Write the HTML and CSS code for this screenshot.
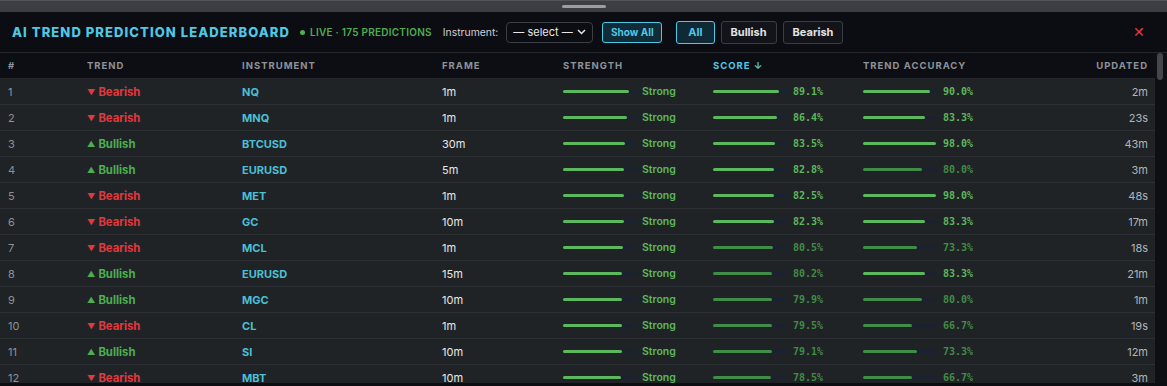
FILE: index.html
```html
<!DOCTYPE html>
<html lang="en">
<head>
<meta charset="utf-8">
<title>AI Trend Prediction Leaderboard</title>
<link rel="stylesheet" href="styles.css">
</head>
<body>
<div class="panel">
  <div class="topbar"><div class="grip"></div></div>
  <header class="header">
    <h1 class="title">AI TREND PREDICTION LEADERBOARD</h1>
    <div class="live"><span class="dot"></span>LIVE · 175 PREDICTIONS</div>
    <label class="inst-label">Instrument:</label>
    <div class="select"><span>— select —</span>
      <svg width="9" height="6" viewBox="0 0 9 6"><path d="M1 1l3.5 3.5L8 1" fill="none" stroke="#e6e6e6" stroke-width="1.5"/></svg>
    </div>
    <button class="btn btn-show">Show All</button>
    <div class="filters">
      <button class="btn btn-filter active">All</button>
      <button class="btn btn-filter">Bullish</button>
      <button class="btn btn-filter">Bearish</button>
    </div>
    <button class="close">✕</button>
  </header>
  <div class="main">
    <div class="table">
      <div class="row head">
        <div>#</div><div>TREND</div><div>INSTRUMENT</div><div>FRAME</div><div>STRENGTH</div><div class="sorted">SCORE ↓</div><div>TREND ACCURACY</div><div class="right">UPDATED</div>
      </div>
      <div id="rows"></div>
    </div>
    <div class="scrollbar"><div class="thumb"></div></div>
  </div>
  <div class="bottom"></div>
</div>
<script src="app.js"></script>
</body>
</html>
```
FILE: app.js
```js
const data = [
  [1,'Bearish','NQ','1m',89.1,90.0,'2m'],
  [2,'Bearish','MNQ','1m',86.4,83.3,'23s'],
  [3,'Bullish','BTCUSD','30m',83.5,98.0,'43m'],
  [4,'Bullish','EURUSD','5m',82.8,80.0,'3m'],
  [5,'Bearish','MET','1m',82.5,98.0,'48s'],
  [6,'Bearish','GC','10m',82.3,83.3,'17m'],
  [7,'Bearish','MCL','1m',80.5,73.3,'18s'],
  [8,'Bullish','EURUSD','15m',80.2,83.3,'21m'],
  [9,'Bullish','MGC','10m',79.9,80.0,'1m'],
  [10,'Bearish','CL','1m',79.5,66.7,'19s'],
  [11,'Bullish','SI','10m',79.1,73.3,'12m'],
  [12,'Bearish','MBT','10m',78.5,66.7,'3m']
];
function bar(v, label, cls) {
  const dim = v < 81 ? ' dim' : '';
  return '<div class="cell-bar"><div class="track"><div class="fill' + (cls || dim) + '" style="width:' + v + '%"></div></div><span class="val ' + (cls ? 'strong' : 'mono') + (cls ? '' : dim) + '">' + label + '</span></div>';
}
const html = data.map(r => {
  const bull = r[1] === 'Bullish';
  return '<div class="row">' +
    '<div class="num">' + r[0] + '</div>' +
    '<div class="trend ' + (bull ? 'bull' : 'bear') + '"><span class="tri">' + (bull ? '▲' : '▼') + '</span>' + r[1] + '</div>' +
    '<div class="inst">' + r[2] + '</div>' +
    '<div class="frame">' + r[3] + '</div>' +
    bar(r[4], 'Strong', ' ') +
    bar(r[4], r[4].toFixed(1) + '%') +
    bar(r[5], r[5].toFixed(1) + '%') +
    '<div class="upd right">' + r[6] + '</div>' +
  '</div>';
}).join('');
document.getElementById('rows').innerHTML = html;
```
FILE: styles.css
```css
* { box-sizing: border-box; }
html, body { margin: 0; padding: 0; }
body {
  width: 1167px; height: 386px; overflow: hidden;
  background: #0c0d12;
  font-family: Inter, "Noto Sans", sans-serif;
  color: #ddd;
}
.panel { display: flex; flex-direction: column; height: 386px; }
.topbar {
  height: 12px; background: #3c3e44; border-top: 1px solid #50535a;
  display: flex; justify-content: center; align-items: center;
}
.grip { width: 44px; height: 3px; border-radius: 2px; background: #9a9da3; }
.header {
  height: 41px; display: flex; align-items: center;
  padding: 0 22px 0 12px; border-bottom: 1px solid #25272c;
  background: #0c0d12;
}
.title {
  margin: 0; font-size: 13px; font-weight: 800; letter-spacing: 1.08px;
  color: #4fc8e6;
}
.live {
  display: flex; align-items: center; margin-left: 10px;
  font-size: 10px; font-weight: 600; color: #4caf50; letter-spacing: 0.25px;
}
.dot { width: 5px; height: 5px; border-radius: 50%; background: #4caf50; margin-right: 5px; }
.inst-label { margin-left: 11px; font-size: 10.4px; color: #cfd0d3; }
.select {
  margin-left: 8px; width: 87px; height: 21px; border: 1px solid #3b3e45; border-radius: 4px;
  display: flex; align-items: center; justify-content: space-between; padding: 0 6px;
  font-size: 11px; color: #e6e6e6; background: #0c0d12;
}
.btn {
  font-family: inherit; cursor: pointer; border-radius: 3px; font-weight: 700;
}
.btn-show {
  margin-left: 9px; height: 21px; width: 60px; font-size: 10px; padding: 0;
  color: #4fc8e6; background: #0f2c38; border: 1px solid #4fc8e6;
}
.filters { display: flex; gap: 6px; margin-left: 14px; }
.btn-filter {
  height: 23px; padding: 0 9px; font-size: 11px;
  color: #e3e3e3; background: #121419; border: 1px solid #3a3d44;
}
.btn-filter.active { color: #4fc8e6; background: #0f2a36; border-color: #4fc8e6; padding: 0 11px; }
.close {
  margin-left: auto; background: none; border: 0; color: #e53b3f; font-size: 14px; padding: 0; cursor: pointer;
}
.main { display: flex; height: 330px; overflow: hidden; }
.table { flex: 1; min-width: 0; }
.row {
  display: grid;
  grid-template-columns: 79px 155px 200px 121px 150px 150px 150px 1fr;
  align-items: center;
  height: 26px; padding: 0 7px 0 8px;
  background: #202326; border-bottom: 1px solid #2c2f33;
  font-size: 11px;
}
.row.head {
  background: #0d0e13; border-bottom: 1px solid #25272c;
  font-size: 9.5px; font-weight: 700; letter-spacing: 1px; color: #8e9299;
}
.row.head .sorted { color: #4fc8e6; }
.right { text-align: right; }
.num { color: #8e9196; }
.trend { font-weight: 700; display: flex; align-items: center; font-size: 11.3px; }
.tri { font-size: 8px; margin-right: 3px; }
.bear { color: #e0393e; }
.bull { color: #4caf50; }
.inst { color: #4bbfd6; font-weight: 700; }
.frame { color: #e8e8e8; }
.upd { color: #b0b3b8; }
.cell-bar { display: flex; align-items: center; }
.track { width: 74px; height: 3px; background: #1a2130; border-radius: 2px; margin-right: 5px; }
.fill { height: 3px; border-radius: 2px; background: #5cb85c; }
.fill.dim { background: #418c46; }
.val.strong { color: #5cb85c; font-weight: 600; font-size: 10.5px; }
.val.mono { font-family: "DejaVu Sans Mono", monospace; font-size: 10px; font-weight: 700; color: #5cb85c; margin-left: 1px; }
.val.mono.dim { color: #418c46; }
.scrollbar { width: 12px; background: #0e0f13; padding: 0 4px 0 2px; }
.thumb { height: 27px; border-radius: 3px; background: #44464b; }
.bottom { height: 3px; background: #0c0d12; }
```
